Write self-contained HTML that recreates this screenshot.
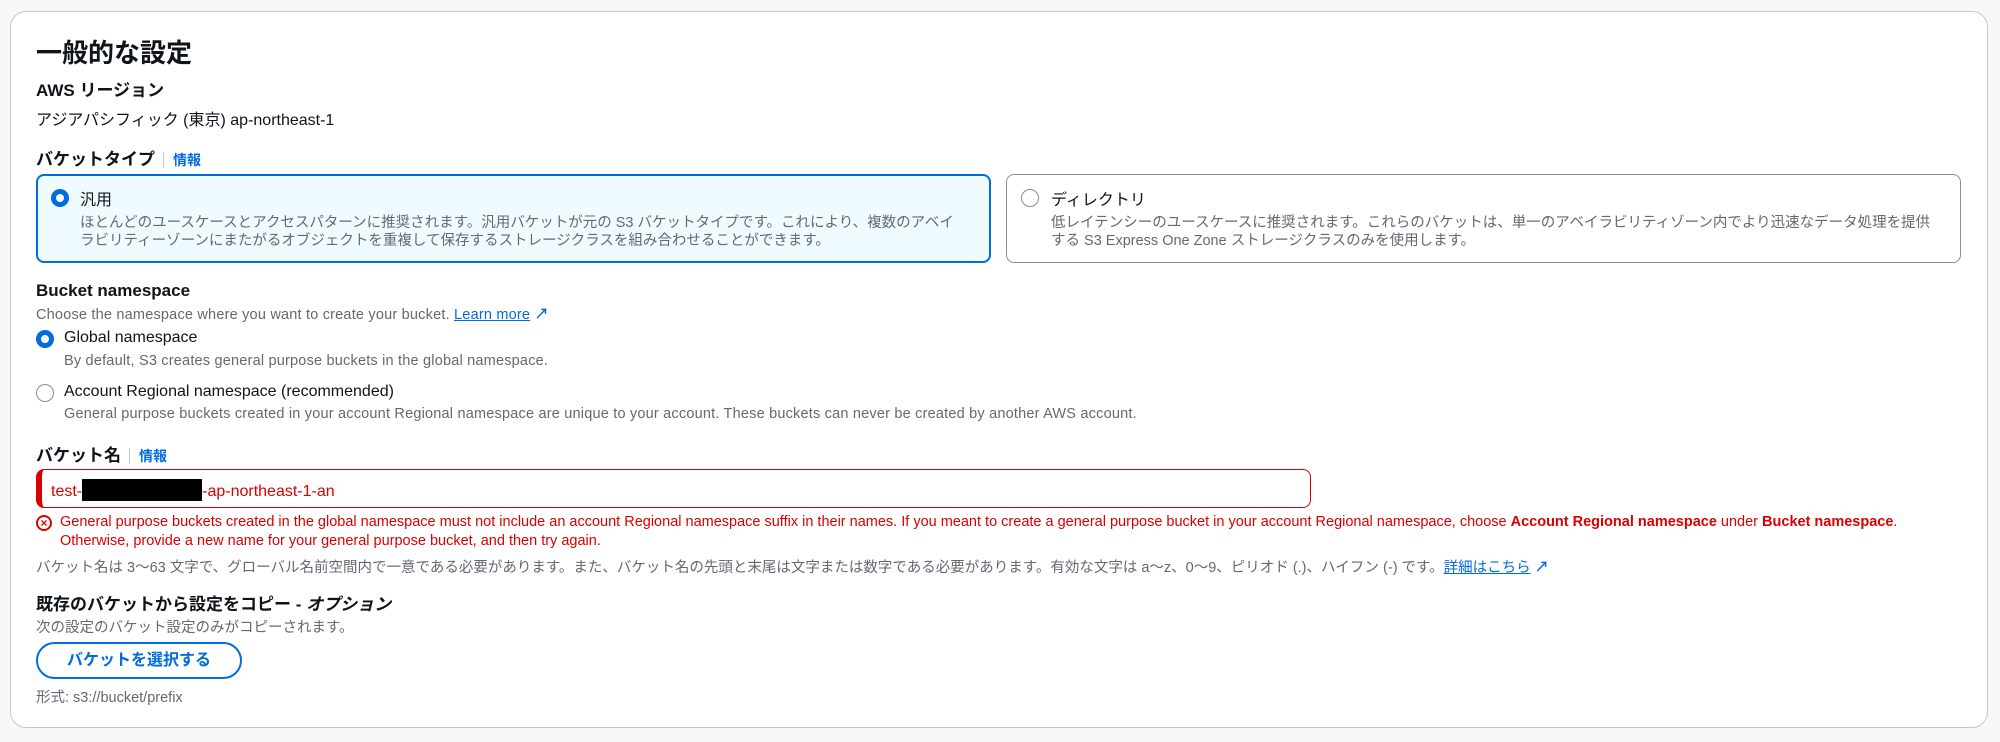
<!DOCTYPE html>
<html><head><meta charset="utf-8"><style>
*{box-sizing:border-box;margin:0;padding:0}
body{width:2000px;height:742px;background:#f8f8f8;font-family:"Liberation Sans","Noto Sans CJK JP",sans-serif;color:#0f141a;position:relative;overflow:hidden}
.card{position:absolute;left:10px;top:11px;width:1978px;height:717px;background:#fff;border:1px solid #c6c6cd;border-radius:16px}
.a{position:absolute;white-space:nowrap}
.h1{font-size:26px;font-weight:bold}
.lb{font-size:17px;font-weight:bold}
.t{font-size:16px}
.d{font-size:14.5px;color:#656871;letter-spacing:.2px}
.info{color:#006ce0;font-size:14px;font-weight:bold;border-left:1px solid #c6c6cd;padding-left:9px;margin-left:8px}
.tile{position:absolute;border-radius:8px}
.radio{position:absolute;width:18px;height:18px;border-radius:50%}
.on{border:5px solid #006ce0;background:#fff}
.off{border:1.5px solid #8c8c94;background:#fff}
.err{color:#db0000;font-size:14.5px;letter-spacing:0}
</style></head><body>
<div class="card"></div>
<div class="a h1" style="left:36px;top:33px">一般的な設定</div>
<div class="a lb" style="left:36px;top:76px">AWS リージョン</div>
<div class="a t" style="left:36px;top:106px">アジアパシフィック (東京) ap-northeast-1</div>
<div class="a lb" style="left:36px;top:145px">バケットタイプ<span class="info">情報</span></div>

<div class="tile" style="left:36px;top:174px;width:955px;height:89px;border:2px solid #006ce0;background:#f0fbff"></div>
<div class="radio on" style="left:51px;top:189px"></div>
<div class="a t" style="left:80px;top:186px">汎用</div>
<div class="a d" style="left:80px;top:211px;letter-spacing:0">ほとんどのユースケースとアクセスパターンに推奨されます。汎用バケットが元の S3 バケットタイプです。これにより、複数のアベイ</div>
<div class="a d" style="left:80px;top:229px;letter-spacing:0">ラビリティーゾーンにまたがるオブジェクトを重複して保存するストレージクラスを組み合わせることができます。</div>

<div class="tile" style="left:1006px;top:174px;width:955px;height:89px;border:1px solid #8c8c94;background:#fff"></div>
<div class="radio off" style="left:1021px;top:189px"></div>
<div class="a t" style="left:1051px;top:186px">ディレクトリ</div>
<div class="a d" style="left:1051px;top:211px;letter-spacing:0">低レイテンシーのユースケースに推奨されます。これらのバケットは、単一のアベイラビリティゾーン内でより迅速なデータ処理を提供</div>
<div class="a d" style="left:1051px;top:229px;letter-spacing:0">する S3 Express One Zone ストレージクラスのみを使用します。</div>

<div class="a lb" style="left:36px;top:281px">Bucket namespace</div>
<div class="a d" style="left:36px;top:303px">Choose the namespace where you want to create your bucket. <span style="color:#006ce0;text-decoration:underline">Learn more</span> <span style="color:#006ce0;font-weight:bold">↗</span></div>
<div class="radio on" style="left:36px;top:330px"></div>
<div class="a t" style="left:64px;top:329px">Global namespace</div>
<div class="a d" style="left:64px;top:353px">By default, S3 creates general purpose buckets in the global namespace.</div>
<div class="radio off" style="left:36px;top:384px"></div>
<div class="a t" style="left:64px;top:383px">Account Regional namespace (recommended)</div>
<div class="a d" style="left:64px;top:406px">General purpose buckets created in your account Regional namespace are unique to your account. These buckets can never be created by another AWS account.</div>

<div class="a lb" style="left:36px;top:441px">バケット名<span class="info">情報</span></div>
<div class="a" style="left:36px;top:469px;width:1275px;height:39px;border:1px solid #db0000;border-left:6px solid #db0000;border-radius:8px"></div>
<div class="a t" style="left:51px;top:479px;color:#db0000">test-<span style="display:inline-block;width:120px;height:22px;background:#000;vertical-align:-5px"></span>-ap-northeast-1-an</div>
<div class="a" style="left:36px;top:515px;width:16px;height:16px;border:2px solid #db0000;border-radius:50%;color:#db0000;font-size:12px;line-height:12px;text-align:center;font-weight:bold">×</div>
<div class="a err" style="left:60px;top:514px">General purpose buckets created in the global namespace must not include an account Regional namespace suffix in their names. If you meant to create a general purpose bucket in your account Regional namespace, choose <b>Account Regional namespace</b> under <b>Bucket namespace</b>.</div>
<div class="a err" style="left:60px;top:533px">Otherwise, provide a new name for your general purpose bucket, and then try again.</div>
<div class="a d" style="left:36px;top:556px;letter-spacing:0">バケット名は 3〜63 文字で、グローバル名前空間内で一意である必要があります。また、バケット名の先頭と末尾は文字または数字である必要があります。有効な文字は a〜z、0〜9、ピリオド (.)、ハイフン (-) です。<span style="color:#006ce0;text-decoration:underline">詳細はこちら</span> <span style="color:#006ce0;font-weight:bold">↗</span></div>

<div class="a lb" style="left:36px;top:590px">既存のバケットから設定をコピー - <i>オプション</i></div>
<div class="a d" style="left:36px;top:616px;letter-spacing:0">次の設定のバケット設定のみがコピーされます。</div>
<div class="a" style="left:36px;top:642px;width:206px;height:37px;border:2px solid #006ce0;border-radius:20px;color:#006ce0;font-size:16px;font-weight:bold;text-align:center;line-height:33px">バケットを選択する</div>
<div class="a d" style="left:36px;top:686px;letter-spacing:0">形式: s3://bucket/prefix</div>
</body></html>
